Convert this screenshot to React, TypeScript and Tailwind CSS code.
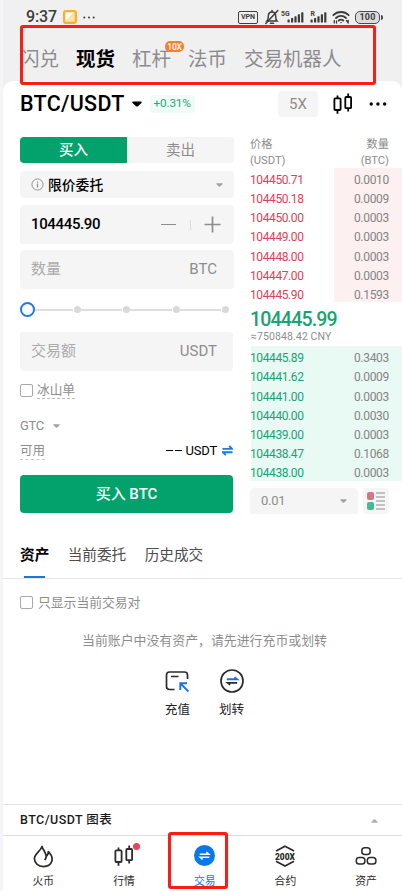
import type { ReactNode } from "react";

const asks = [
  ["104450.71", "0.0010"],
  ["104450.18", "0.0009"],
  ["104450.00", "0.0003"],
  ["104449.00", "0.0003"],
  ["104448.00", "0.0003"],
  ["104447.00", "0.0003"],
  ["104445.90", "0.1593"],
];

const bids = [
  ["104445.89", "0.3403"],
  ["104441.62", "0.0009"],
  ["104441.00", "0.0003"],
  ["104440.00", "0.0030"],
  ["104439.00", "0.0003"],
  ["104438.47", "0.1068"],
  ["104438.00", "0.0003"],
];

const Caret = ({ className }: { className: string }) => (
  <svg viewBox="0 0 10 6" className={className} fill="currentColor">
    <path d="M1.2 0.5h7.6c.9 0 1.2.9.6 1.5L6 5.2c-.6.5-1.4.5-2 0L.6 2C0 1.4.3.5 1.2.5Z" />
  </svg>
);

const Candles = ({ className }: { className: string }) => (
  <svg viewBox="0 0 22 22" className={className} fill="none" stroke="currentColor" strokeWidth="1.8">
    <rect x="2.4" y="5.4" width="6.2" height="11.6" rx="1" />
    <path d="M5.5 2.4v3M5.5 17v3.8" />
    <rect x="13.3" y="4" width="5.8" height="11.2" rx="1" />
    <path d="M16.2.6V4M16.2 15.2v3.4" />
  </svg>
);

const Signal = ({ label, labelX }: { label: string; labelX: number }) => (
  <svg viewBox="0 0 24 14" className="h-[14px] w-6" fill="#3d3d3d">
    <text x={labelX} y="5.6" fontSize="6.8" fontWeight="700" fontFamily="Roboto">
      {label}
    </text>
    <rect x="6.5" y="9.5" width="2.2" height="3" rx=".6" />
    <rect x="10" y="8" width="2.2" height="4.5" rx=".6" />
    <rect x="13.4" y="6.3" width="2.2" height="6.2" rx=".6" />
    <rect x="16.8" y="4.3" width="2.2" height="8.2" rx=".6" />
    <rect x="20.2" y="2.3" width="2.2" height="10.2" rx=".6" />
  </svg>
);

const StatusBar = () => (
  <div className="flex h-[34px] items-center pl-[23px] pr-[19px] text-[#3d3d3d]">
    <span className="text-[16px] font-medium tracking-[-0.1px]">9:37</span>
    <svg viewBox="0 0 14 14" className="ml-[6px] size-[14px]">
      <rect width="14" height="14" rx="3" fill="#fcae2f" />
      <path d="M2.3 2.3h9.4L2.3 11.7Z" fill="#fffdf6" />
      <path d="M11.7 2.3v9.4H2.3Z" fill="#fde3a5" />
    </svg>
    <svg viewBox="0 0 12 3" className="ml-[6px] h-[3px] w-3" fill="currentColor">
      <circle cx="1.3" cy="1.5" r="1" />
      <circle cx="6" cy="1.5" r="1" />
      <circle cx="10.7" cy="1.5" r="1" />
    </svg>
    <div className="ml-auto flex items-center">
      <span className="flex h-[13px] w-5 items-center justify-center rounded-[2px] border-[1.5px] border-[#3d3d3d] text-[7px] font-bold">
        VPN
      </span>
      <svg viewBox="0 0 16 16" className="ml-[6px] size-4" fill="none" stroke="currentColor" strokeWidth="1.5" strokeLinecap="round">
        <path d="M3 12h10c-1.2-1.3-1.3-2.5-1.3-4.6 0-2.4-1.4-4.3-3.7-4.3S4.3 5 4.3 7.4C4.3 9.5 4.2 10.700 3 12Z" />
        <path d="M6.5 14.3h3M13.8 1.5 1.8 14.5M8 1.5v1" />
      </svg>
      <div className="ml-[1px]">
        <Signal label="5G" labelX={0} />
      </div>
      <div className="-ml-px">
        <Signal label="R" labelX={6.5} />
      </div>
      <svg viewBox="0 0 18 14" className="ml-[4px] h-[14px] w-[18px]" fill="none" stroke="currentColor" strokeWidth="1.8" strokeLinecap="round">
        <path d="M1.3 5.2c4.3-4.3 11.1-4.3 15.4 0M4 8c2.8-2.8 7.2-2.8 10 0M6.7 10.5c1.3-1.3 3.3-1.3 4.6 0" />
        <path d="M9 12.5v.2M2.3 10.5v2.5M4.5 11v2M14.5 10.5l1.8 2.5M16.3 10.5v1" strokeWidth="1.3" />
      </svg>
      <span className="ml-[5px] flex h-[13px] w-[25px] items-center justify-center rounded-[5px] border-[1.5px] border-[#4a4a4a] bg-[#dcdcdc] pt-px text-[9px] font-bold tracking-[0.2px]">
        100
      </span>
      <span className="ml-px h-[5px] w-[2px] rounded-r bg-[#4a4a4a]" />
    </div>
  </div>
);

const TopTabs = () => (
  <div className="flex h-[47px] items-center gap-[17px] pl-[17px] pt-[5px] text-[19.5px] leading-none text-[#8c8c8e]">
    <span>闪兑</span>
    <span className="font-bold text-black">现货</span>
    <span className="relative">
      杠杆
      <span className="absolute -top-[9px] left-[33px] flex h-[11px] w-[19px] items-center justify-center rounded-[5px] bg-[#f5812f] text-[8.5px] font-medium tracking-[-0.2px] text-white">
        10X
      </span>
    </span>
    <span>法币</span>
    <span>交易机器人</span>
  </div>
);

const PairHeader = () => (
  <div className="flex h-[46px] items-center pl-[17px] pr-[15px]">
    <h1 className="text-[21.5px] font-medium leading-none tracking-[0.3px] text-black">BTC/USDT</h1>
    <Caret className="ml-[7px] h-[6px] w-[10px] text-black" />
    <span className="ml-[8px] flex h-[18px] w-[45px] items-center justify-center rounded-[3px] bg-[#f0faf6] text-[11.8px] tracking-[-0.2px] text-[#2ba777]">
      +0.31%
    </span>
    <span className="ml-auto flex h-[26px] w-10 items-center justify-center rounded-[4px] bg-[#f5f5f5] text-[15px] text-[#8d8d8d]">
      5X
    </span>
    <Candles className="ml-[14px] size-[22px] text-black" />
    <svg viewBox="0 0 18 4" className="ml-[15px] h-1 w-[18px]" fill="#000">
      <circle cx="2.2" cy="2" r="1.7" />
      <circle cx="8.9" cy="2" r="1.7" />
      <circle cx="15.6" cy="2" r="1.7" />
    </svg>
  </div>
);

const Swap = ({ className }: { className: string }) => (
  <svg viewBox="0 0 12 12" className={className} fill="none" stroke="currentColor" strokeWidth="2">
    <path d="M.5 4.3h10.5L7.8 1M11.5 7.900H1L4.2 11" />
  </svg>
);

const Slider = () => (
  <div className="flex h-[41px] items-center pr-[5px]">
    <span className="relative z-10 -mr-[4px] size-[15px] shrink-0 rounded-full border-2 border-[#1f78e0] bg-white" />
    {[0, 1, 2, 3].map((i) => (
      <div key={i} className="flex flex-1 items-center gap-px">
        <span className="h-[2px] flex-1 bg-[#dedede]" />
        <span className="size-[7px] rounded-full bg-[#d9d9d9]" />
      </div>
    ))}
  </div>
);

const Checkbox = () => (
  <span className="size-[13px] shrink-0 rounded-[2px] border border-[#a8a8a8]" />
);

const OrderForm = () => (
  <div className="w-[214px] pt-[10px]">
    <div className="flex h-[26px] overflow-hidden rounded-[4px] text-[14.5px] leading-none">
      <span className="flex w-[107px] items-center justify-center bg-[#03a26d] pt-[2px] font-medium text-white">买入</span>
      <span className="flex flex-1 items-center justify-center bg-[#f5f5f5] pt-[2px] text-[#8d8d8d]">卖出</span>
    </div>
    <div className="mt-[8px] flex h-[27px] items-center rounded-[4px] bg-[#f5f5f5] pl-[11px] pr-[11px]">
      <svg viewBox="0 0 14 14" className="size-[13px]" fill="none" stroke="#8d8d8d">
        <circle cx="7" cy="7" r="6" />
        <path d="M7 6v4.3M7 3.7v1.3" strokeWidth="1.2" />
      </svg>
      <span className="ml-[4px] pt-[2px] text-[13.8px] font-medium leading-none text-black">限价委托</span>
      <Caret className="ml-auto h-[4px] w-[7px] text-[#a3a3a3]" />
    </div>
    <div className="mt-[7px] flex h-[39px] items-center rounded-[4px] bg-[#f5f5f5] pl-[11px] pr-[13px]">
      <span className="text-[15px] font-medium tracking-[-0.35px] text-black">104445.90</span>
      <span className="ml-auto h-[1.5px] w-[15px] bg-[#8d8d8d]" />
      <span className="ml-[14px] h-[10px] w-px bg-[#dcdcdc]" />
      <svg viewBox="0 0 18 18" className="ml-[13px] size-[17px]" stroke="#8d8d8d" strokeWidth="1.8">
        <path d="M9 .5v17M.5 9h17" />
      </svg>
    </div>
    <div className="mt-[6px] flex h-[39px] items-center justify-between rounded-[4px] bg-[#f5f5f5] pl-[11px] pr-[17px] text-[15px]">
      <span className="text-[#ababab]">数量</span>
      <span className="text-[#8d8d8d]">BTC</span>
    </div>
    <Slider />
    <div className="mt-[2px] flex h-[39px] w-[213px] items-center justify-between rounded-[4px] bg-[#f5f5f5] pl-[11px] pr-[16px] text-[15px]">
      <span className="text-[#ababab]">交易额</span>
      <span className="text-[#8d8d8d]">USDT</span>
    </div>
    <div className="mt-[11px] flex h-4 items-center gap-[4px] text-[12.7px] text-[#8d8d8d]">
      <Checkbox />
      <span className="border-b border-dashed border-[#bdbdbd] pt-px leading-4">冰山单</span>
    </div>
    <div className="mt-[19px] flex h-[18px] items-center text-[13px] tracking-[-0.3px] text-[#8d8d8d]">
      GTC
      <Caret className="ml-[9px] h-[4px] w-[7px] text-[#a3a3a3]" />
    </div>
    <div className="mt-[7px] flex h-[17px] items-center text-[12.5px]">
      <span className="border-b border-dashed border-[#c8c8c8] pt-px leading-4 text-[#8d8d8d]">可用</span>
      <span className="ml-auto flex items-center gap-[4px] text-[13px] tracking-[-0.2px] text-black">
        <span className="flex gap-[2px]">
          <i className="h-[1.5px] w-[7px] bg-black" />
          <i className="h-[1.5px] w-[7px] bg-black" />
        </span>
        USDT
      </span>
      <Swap className="ml-[5px] mr-px size-[11px] text-[#1f78e0]" />
    </div>
    <button className="mt-[16px] h-[38px] w-[213px] rounded-[4px] bg-[#03a26d] pt-px text-[15px] font-medium text-white">
      买入 BTC
    </button>
  </div>
);

const Rows = ({ rows, color, bar }: { rows: string[][]; color: string; bar: string }) => (
  <div className="relative text-[12px] leading-none">
    <div className={`absolute inset-y-0 right-0 ${bar}`} />
    {rows.map(([price, amount]) => (
      <div key={price} className="relative flex h-[19.2px] items-center justify-between pr-[13px] pt-[4.6px]">
        <span className={`tracking-[-0.4px] ${color}`}>{price}</span>
        <span className="tracking-[-0.3px] text-[#858585]">{amount}</span>
      </div>
    ))}
  </div>
);

const OrderBook = () => (
  <div className="flex-1 pt-[10px]">
    <div className="flex h-[31px] justify-between pr-[13px] text-[11.2px] leading-[15.5px] text-[#8d8d8d]">
      <span>
        价格
        <br />
        (USDT)
      </span>
      <span className="text-right">
        数量
        <br />
        (BTC)
      </span>
    </div>
    <Rows rows={asks} color="text-[#dd3f56]" bar="w-[68px] bg-[#fdf0f0]" />
    <div className="h-[44px] pt-[5px]">
      <p className="text-[19.5px] font-medium leading-[25px] tracking-[-0.8px] text-[#17a374]">104445.99</p>
      <p className="pl-px text-[10.5px] leading-[10px] tracking-[0.1px] text-[#8d8d8d]">≈750848.42 CNY</p>
    </div>
    <Rows rows={bids} color="text-[#17a374]" bar="w-[151px] bg-[#e9f9f4]" />
    <div className="mt-[7px] flex gap-[5px]">
      <div className="flex h-[26px] w-[108px] items-center justify-between rounded-[4px] bg-[#f5f5f5] pl-[11px] pr-[11px] text-[13px] tracking-[-0.3px] text-[#8d8d8d]">
        0.01
        <Caret className="h-[4px] w-[7px] text-[#a3a3a3]" />
      </div>
      <div className="flex size-[26px] items-center justify-center rounded-[4px] bg-[#f5f5f5]">
        <svg viewBox="0 0 18 18" className="size-[18px]">
          <rect x="0" y="0" width="7" height="8" rx="2" fill="#dc7384" />
          <rect x="0" y="10" width="7" height="8" rx="2" fill="#47b893" />
          <path d="M9 1h9M9 5h9M9 9h9M9 13h9M9 17h9" stroke="#8d8d8d" strokeWidth="1.2" />
        </svg>
      </div>
    </div>
  </div>
);

const Assets = () => (
  <div className="flex-1">
    <div className="flex h-[49px] gap-[18.4px] border-b border-[#e6e7ea] pl-[17px] text-[14.65px] text-[#4d4d4d]">
      <span className="flex h-[48px] flex-col items-center justify-between pt-[14px] font-bold leading-[22px] text-black">
        资产
        <i className="h-[2px] w-[21px] bg-[#1478e0]" />
      </span>
      <span className="pt-[14px] leading-[22px]">当前委托</span>
      <span className="pt-[14px] leading-[22px]">历史成交</span>
    </div>
    <div className="mt-[14px] flex h-[19px] items-center gap-[5px] pl-[17px] text-[12.8px] text-[#8d8d8d]">
      <Checkbox />
      只显示当前交易对
    </div>
    <p className="mt-[19px] pl-[4px] text-center text-[12.9px] leading-[19px] text-[#8d8d8d]">当前账户中没有资产，请先进行充币或划转</p>
    <div className="mt-[19px] flex justify-center gap-[29px] pl-[4px] text-[12.5px] leading-[18px] text-[#222]">
      <div className="flex flex-col items-center">
        <svg viewBox="0 0 24 24" className="mb-[8px] size-6" fill="none" stroke="#2b2b2b" strokeWidth="1.7">
          <path d="M9.5 20.5H4.5Q1.500 20.5 1.5 17.5V6Q1.5 3 4.5 3H19.5Q22.5 3 22.5 6V10" />
          <path d="M6 7.5h7.5" strokeWidth="1.5" />
          <path d="M23.5 22.5 15.5 14.5M15.3 21V14.2H22" stroke="#1f6fde" strokeWidth="1.9" />
        </svg>
        充值
      </div>
      <div className="flex flex-col items-center">
        <svg viewBox="0 0 24 24" className="mb-[8px] size-6" fill="none" stroke="#2b2b2b" strokeWidth="1.7">
          <circle cx="12" cy="12" r="11" />
          <path d="M6.8 10.3h10.2L14.5 8.3" stroke="#1f6fde" strokeWidth="1.9" />
          <path d="M17.2 13.9H7.5l2.6 2" strokeWidth="1.6" />
        </svg>
        划转
      </div>
    </div>
  </div>
);

const NavItem = ({ label, active, children }: { label: string; active?: boolean; children: ReactNode }) => (
  <div className={`flex w-[80.7px] shrink-0 flex-col items-center pt-[9px] text-[10.8px] leading-[14px] ${active ? "text-[#1478e0]" : "text-[#2b2b2b]"}`}>
    <div className="relative mb-[8px] h-[22px]">{children}</div>
    {label}
  </div>
);

const BottomNav = () => (
  <div className="flex h-[56px] border-t border-[#dedede]">
    <NavItem label="火币">
      <svg viewBox="0 0 22 24" className="h-[23px] w-[21px]" fill="none" stroke="currentColor" strokeWidth="1.8" strokeLinejoin="round">
        <path d="M9.5 1.5c.8 3.7 4.2 6 4.3 10.5 1.5-1.2 2.3-3 2.2-5 3.2 3 4.8 6.4 3.7 10-1.1 3.4-4.5 5.5-8.7 5.5-5.2 0-9.5-3.5-9.5-8.2C1.5 9 7.5 7 9.5 1.5Z" />
        <path d="M13.8 12c0 1.5-.6 2.7-1.6 3.7" />
      </svg>
    </NavItem>
    <NavItem label="行情">
      <Candles className="size-[22px]" />
      <span className="absolute -right-[5px] -top-[2px] size-[7px] rounded-full bg-[#ea4359]" />
    </NavItem>
    <NavItem label="交易" active>
      <svg viewBox="0 0 22 22" className="size-[21px]" fill="none" stroke="#fff" strokeWidth="1.6">
        <circle cx="11" cy="11" r="11" fill="#0c77e8" stroke="none" />
        <path d="M6 9.7h9.5L13 7.5M16 12.9H6.5l2.5 2.2" />
      </svg>
    </NavItem>
    <NavItem label="合约">
      <svg viewBox="0 0 24 22" className="h-[22px] w-6 overflow-visible" fill="none" stroke="currentColor" strokeWidth="1.7">
        <path d="M3 6 12 1.2 21 6M3 16.2 12 21l9-4.8" />
        <text x="12" y="14.6" textAnchor="middle" textLength="20" lengthAdjust="spacingAndGlyphs" fontSize="9.5" fontWeight="900" fontFamily="Roboto" fill="currentColor" stroke="none">
          200X
        </text>
      </svg>
    </NavItem>
    <NavItem label="资产">
      <svg viewBox="0 0 22 22" className="size-[22px]" fill="none" stroke="currentColor" strokeWidth="1.5">
        <rect x="6.8" y="2.8" width="8.4" height="6.8" rx="3" />
        <rect x="1.3" y="12.5" width="8.6" height="6.5" rx="2.8" />
        <rect x="12.3" y="12.5" width="8.6" height="6.5" rx="2.8" />
      </svg>
    </NavItem>
  </div>
);

export default function App() {
  return (
    <div className="relative h-[891px] w-[402px] overflow-hidden bg-[#f4f5f9] pl-[3px] font-[Roboto,'Noto_Sans_CJK_SC',sans-serif]">
      <div className="flex h-full flex-col bg-[#f0f0f0]">
        <StatusBar />
        <TopTabs />
        <main className="flex flex-1 flex-col rounded-t-[10px] bg-white">
          <PairHeader />
          <div className="flex h-[403px] gap-[16px] pl-[17px]">
            <OrderForm />
            <OrderBook />
          </div>
          <Assets />
          <div className="flex h-[31px] items-center justify-between border-t border-[#e4e4e4] pl-[17px] pr-[24px] pt-px text-[12.5px] font-medium text-[#1a1a1a]">
            <span className="tracking-[0.45px]">BTC/USDT 图表</span>
            <Caret className="h-[4px] w-[7px] rotate-180 text-[#b0b0b0]" />
          </div>
          <BottomNav />
        </main>
      </div>
      {/* Highlight frames */}
      <div className="absolute left-[20px] top-[25px] h-[60px] w-[356px] rounded-[3px] border-3 border-[#fb1c14]" />
      <div className="absolute left-[168px] top-[832px] h-[57px] w-[60px] rounded-[3px] border-3 border-[#fb1c14]" />
    </div>
  );
}
